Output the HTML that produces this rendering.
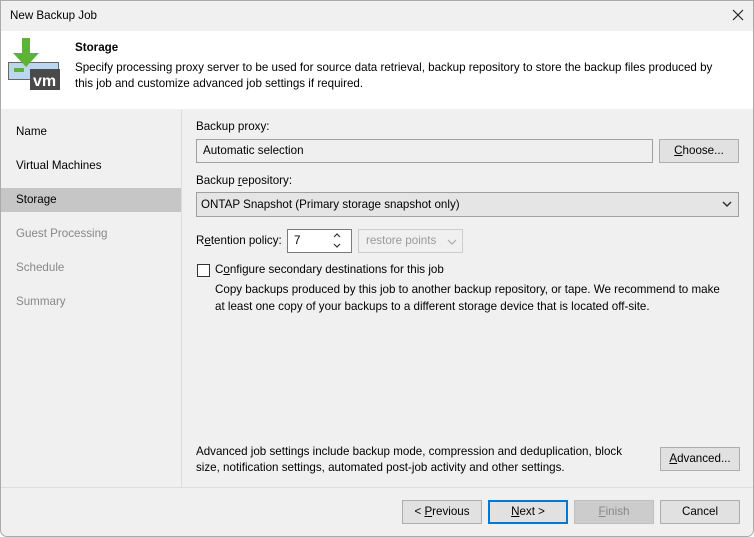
<!DOCTYPE html><html><head><style>
body{margin:0;width:754px;height:537px;overflow:hidden;background:#fff;font-family:"Liberation Sans",sans-serif;font-size:11.6px;color:#000}
.win{position:absolute;left:0;top:0;width:752px;height:535px;border:1px solid #aaa;border-radius:0 0 7px 7px;background:#f0f0f0;overflow:hidden}
.a{position:absolute}
.btn{position:absolute;border:1px solid #adadad;background:#e1e1e1;text-align:center;line-height:22px;box-sizing:border-box;height:24px}
u{text-decoration:underline}
.nav{position:absolute;left:15px}
</style></head><body><div class="win">
<div class="a" style="left:0;top:0;width:752px;height:30px;background:#f0f0f0"></div>
<div class="a" style="left:9px;top:8px">New Backup Job</div>
<svg class="a" style="left:731px;top:8px" width="12" height="12"><path d="M1 1L11 11M11 1L1 11" stroke="#222" stroke-width="1.2"/></svg>
<div class="a" style="left:0;top:30px;width:752px;height:78px;background:#fff"></div>
<svg class="a" style="left:6px;top:36px" width="56" height="54">
<rect x="1.5" y="25.5" width="50" height="17" fill="#bcd6ef" stroke="#666"/>
<rect x="7" y="31" width="10" height="4" fill="#5cb338"/>
<rect x="23" y="32" width="30" height="21" fill="#4a4a4a"/>
<text x="26" y="49" fill="#fff" font-family="Liberation Sans" font-weight="bold" font-size="16">vm</text>
<path d="M15 1h8v15h9l-13 14L6 16h9z" fill="#5cb338"/>
</svg>
<div class="a" style="left:74px;top:40px;font-weight:bold">Storage</div>
<div class="a" style="left:74px;top:59px;width:676px;line-height:16px">Specify processing proxy server to be used for source data retrieval, backup repository to store the backup files produced by<br>this job and customize advanced job settings if required.</div>
<div class="a" style="left:0;top:108px;width:180px;height:378px;background:#f0f0f0;border-right:1px solid #ddd"></div>
<div class="nav a" style="top:124px">Name</div>
<div class="nav a" style="top:158px">Virtual Machines</div>
<div class="a" style="left:0;top:187px;width:180px;height:24px;background:#c6c6c6"></div>
<div class="nav a" style="top:192px">Storage</div>
<div class="nav a" style="top:226px;color:#888">Guest Processing</div>
<div class="nav a" style="top:260px;color:#888">Schedule</div>
<div class="nav a" style="top:294px;color:#888">Summary</div>
<div class="a" style="left:195px;top:119px">Backup proxy:</div>
<div class="a" style="left:195px;top:138px;width:457px;border:1px solid #a0a0a0;background:#efefef;box-sizing:border-box;height:24px;line-height:22px;padding-left:6px">Automatic selection</div>
<div class="btn" style="left:658px;top:138px;width:80px"><u>C</u>hoose...</div>
<div class="a" style="left:195px;top:173px">Backup <u>r</u>epository:</div>
<div class="a" style="left:195px;top:191px;width:543px;height:25px;border:1px solid #a0a0a0;background:#e5e5e5;box-sizing:border-box;line-height:23px;padding-left:4px">ONTAP Snapshot (Primary storage snapshot only)</div>
<svg class="a" style="left:721px;top:200px" width="10" height="7"><path d="M1 1l4 4 4-4" stroke="#333" stroke-width="1.5" fill="none"/></svg>
<div class="a" style="left:195px;top:233px">R<u>e</u>tention policy:</div>
<div class="a" style="left:286px;top:228px;width:65px;height:24px;border:1px solid #7a7a7a;background:#fff;box-sizing:border-box;line-height:22px;padding-left:6px">7</div>
<svg class="a" style="left:331px;top:230px" width="10" height="20"><path d="M2 6l3-3 3 3M2 13l3 3 3-3" stroke="#333" stroke-width="1.2" fill="none"/></svg>
<div class="a" style="left:357px;top:228px;width:105px;height:24px;border:1px solid #ccc;box-sizing:border-box;line-height:22px;padding-left:7px;color:#999">restore points</div>
<svg class="a" style="left:446px;top:238px" width="10" height="7"><path d="M1 1l4 4 4-4" stroke="#aaa" stroke-width="1.2" fill="none"/></svg>
<div class="a" style="left:196px;top:263px;width:13px;height:13px;border:1px solid #333;background:#fff;box-sizing:border-box"></div>
<div class="a" style="left:214px;top:262px">C<u>o</u>nfigure secondary destinations for this job</div>
<div class="a" style="left:214px;top:280px;width:535px;line-height:17px">Copy backups produced by this job to another backup repository, or tape. We recommend to make<br>at least one copy of your backups to a different storage device that is located off-site.</div>
<div class="a" style="left:195px;top:443px;width:445px;line-height:16px">Advanced job settings include backup mode, compression and deduplication, block size, notification settings, automated post-job activity and other settings.</div>
<div class="btn" style="left:659px;top:446px;width:80px"><u>A</u>dvanced...</div>
<div class="a" style="left:0;top:486px;width:752px;height:1px;background:#ddd"></div>
<div class="btn" style="left:401px;top:499px;width:80px">&lt; <u>P</u>revious</div>
<div class="btn" style="left:487px;top:499px;width:80px;border:2px solid #0078d7;line-height:20px"><u>N</u>ext &gt;</div>
<div class="btn" style="left:573px;top:499px;width:80px;background:#ccc;border-color:#bfbfbf;color:#888"><u>F</u>inish</div>
<div class="btn" style="left:659px;top:499px;width:80px">Cancel</div>
</div></body></html>
